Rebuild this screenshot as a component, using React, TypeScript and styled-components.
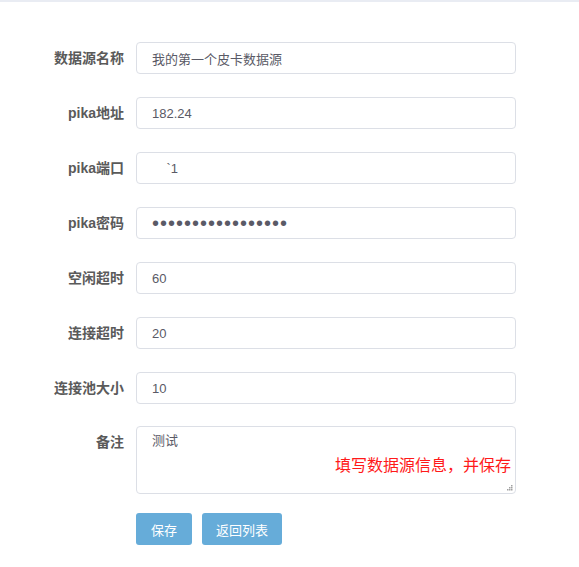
import styled, { createGlobalStyle } from "styled-components";

const GlobalStyle = createGlobalStyle`
  body {
    margin: 0;
    background: #fff;
    font-family: "Liberation Sans", "Noto Sans CJK SC", sans-serif;
  }
`;

const Page = styled.div`
  border-top: 2px solid #e9ecf3;
  padding: 40px 0 22px 0;
`;

const Form = styled.form`
  display: flex;
  flex-direction: column;
  gap: 23px;
`;

const Row = styled.div<{ $shift?: number }>`
  display: flex;
  align-items: flex-start;
  gap: 12px;
  margin-top: ${(p) => p.$shift ?? 0}px;
`;

const Label = styled.label`
  width: 124px;
  text-align: right;
  line-height: 32px;
  font-size: 14px;
  font-weight: bold;
  color: #5a5a5a;
`;

const Input = styled.input<{ $dots?: boolean }>`
  box-sizing: border-box;
  width: 380px;
  height: 32px;
  padding: 0 15px;
  border: 1px solid #dcdfe6;
  border-radius: 4px;
  font-family: "Liberation Sans", "Noto Sans CJK SC", sans-serif;
  font-size: ${(p) => (p.$dots ? "20px" : "13px")};
  letter-spacing: ${(p) => (p.$dots ? "1px" : "normal")};
  color: #5a5a66;
  outline: none;
`;

const NoteWrap = styled.div`
  position: relative;
  width: 380px;
`;

const TextArea = styled.textarea`
  display: block;
  box-sizing: border-box;
  width: 380px;
  height: 68px;
  padding: 5px 15px;
  border: 1px solid #dcdfe6;
  border-radius: 4px;
  font-family: "Liberation Sans", "Noto Sans CJK SC", sans-serif;
  font-size: 13px;
  line-height: 18px;
  color: #5a5a66;
  outline: none;
  resize: none;
`;

const Hint = styled.span`
  position: absolute;
  right: 5px;
  top: 26px;
  font-size: 16px;
  color: #ff1a1a;
  font-family: "Noto Sans CJK SC", sans-serif;
  pointer-events: none;
`;

const Grip = styled.svg`
  position: absolute;
  right: 3px;
  bottom: 3px;
  pointer-events: none;
`;

const Actions = styled.div`
  display: flex;
  gap: 10px;
  margin-left: 136px;
  margin-top: -4px;
`;

const Button = styled.button<{ $w: number }>`
  width: ${(p) => p.$w}px;
  height: 32px;
  border: none;
  border-radius: 3px;
  background: #66acd9;
  color: #fff;
  font-size: 13px;
  font-family: "Noto Sans CJK SC", sans-serif;
  cursor: pointer;
`;

const fields = [
  { label: "数据源名称", value: "我的第一个皮卡数据源" },
  { label: "pika地址", value: "182.24" },
  { label: "pika端口", value: "\u00a0\u00a0\u00a0\u00a0`1" },
  { label: "pika密码", value: "12345678901234567", password: true },
  { label: "空闲超时", value: "60" },
  { label: "连接超时", value: "20" },
  { label: "连接池大小", value: "10" },
];

export default function App() {
  return (
    <Page>
      <GlobalStyle />
      <Form onSubmit={(e) => e.preventDefault()}>
        {fields.map((f) => (
          <Row key={f.label}>
            <Label>{f.label}</Label>
            <Input
              type={f.password ? "password" : "text"}
              $dots={f.password}
              defaultValue={f.value}
            />
          </Row>
        ))}
        <Row $shift={-1}>
          <Label>备注</Label>
          <NoteWrap>
            <TextArea defaultValue="测试" />
            <Hint>填写数据源信息，并保存</Hint>
            <Grip width="7" height="7" viewBox="0 0 7 7">
              <g fill="#a0a0a0">
                <rect x="5" y="1" width="1.5" height="1.5" />
                <rect x="3" y="3" width="1.5" height="1.5" />
                <rect x="5" y="3" width="1.5" height="1.5" />
                <rect x="1" y="5" width="1.5" height="1.5" />
                <rect x="3" y="5" width="1.5" height="1.5" />
                <rect x="5" y="5" width="1.5" height="1.5" />
              </g>
            </Grip>
          </NoteWrap>
        </Row>
        <Actions>
          <Button $w={56}>保存</Button>
          <Button $w={80}>返回列表</Button>
        </Actions>
      </Form>
    </Page>
  );
}
